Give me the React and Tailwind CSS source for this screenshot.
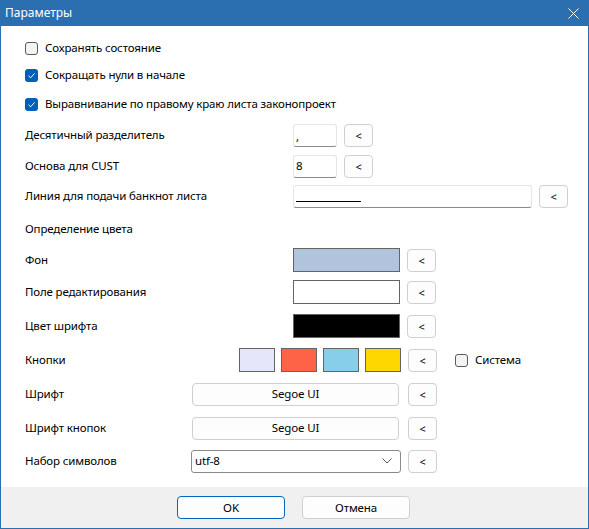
import React from "react";

const font = { fontFamily: '"Noto Sans", "Open Sans", sans-serif' };

const SmallButton = ({ className = "" }) => (
  <button
    className={`w-[29px] h-[23px] rounded-[4px] border border-[#d0d0d0] bg-[#fdfdfd] text-[11px] leading-none text-black flex items-center justify-center ${className}`}
  >
    &lt;
  </button>
);

const CheckBox = ({ checked }) =>
  checked ? (
    <span className="w-[13px] h-[13px] rounded-[3px] bg-[#005fb8] flex items-center justify-center shrink-0">
      <svg width="9" height="9" viewBox="0 0 9 9" fill="none">
        <path d="M1.5 4.8 L3.6 6.8 L7.6 2.4" stroke="white" strokeWidth="1" />
      </svg>
    </span>
  ) : (
    <span className="w-[13px] h-[13px] rounded-[3px] border border-[#5a5a5a] bg-[#f3f3f3] shrink-0" />
  );

const Swatch = ({ color, w = "w-[107px]" }) => (
  <div className={`${w} h-[24px] border border-[#646464]`} style={{ background: color }} />
);

const Row = ({ top, label, labelW = "w-[268px]", children }) => (
  <div className="flex items-center h-[24px]" style={{ marginTop: top }}>
    <div className={`${labelW} shrink-0`}>{label}</div>
    {children}
  </div>
);

export default function App() {
  return (
    <div
      className="w-[589px] h-[529px] flex flex-col border border-t-0 border-[#2b6fb0] bg-white text-[11.5px] tracking-[-0.15px] text-black overflow-hidden"
      style={font}
    >
      {/* title bar */}
      <div className="h-[26px] shrink-0 bg-[#2b6fb0] -mx-px flex items-center justify-between pl-[5px] pr-[10px] text-white text-[12px] tracking-normal">
        <span>Параметры</span>
        <svg width="11" height="11" viewBox="0 0 11 11" stroke="white" strokeWidth="1">
          <path d="M0.5 0.5 L10.5 10.5 M10.5 0.5 L0.5 10.5" />
        </svg>
      </div>

      <div className="flex-1 pl-[24px]">
        {/* checkboxes */}
        <div className="flex items-center gap-[7px] h-[24px] mt-[10px]">
          <CheckBox />
          <span>Сохранять состояние</span>
        </div>
        <div className="flex items-center gap-[7px] h-[24px] mt-[3px]">
          <CheckBox checked />
          <span>Сокращать нули в начале</span>
        </div>
        <div className="flex items-center gap-[7px] h-[24px] mt-[5px]">
          <CheckBox checked />
          <span>Выравнивание по правому краю листа законопроект</span>
        </div>

        <Row top={7} label="Десятичный разделитель">
          <div className="w-[44px] h-[23px] border border-[#e5e5e5] border-b-[#8a8a8a] rounded-[3px] flex items-end pl-[2px] pb-[3px] leading-none">,</div>
          <SmallButton className="ml-[7px]" />
        </Row>
        <Row top={7} label="Основа для CUST">
          <div className="w-[44px] h-[23px] border border-[#e5e5e5] border-b-[#8a8a8a] rounded-[3px] flex items-center pl-[2px]">8</div>
          <SmallButton className="ml-[7px]" />
        </Row>
        <Row top={6} label="Линия для подачи банкнот листа">
          <div className="w-[239px] h-[23px] border border-[#e5e5e5] border-b-[#8a8a8a] rounded-[3px] flex items-center pl-[2px]">
            <div className="w-[65px] h-px bg-black mt-[10px]" />
          </div>
          <SmallButton className="ml-[7px]" />
        </Row>

        <div className="flex items-center h-[24px] mt-[9px]">Определение цвета</div>

        <Row top={7} label="Фон">
          <Swatch color="#b0c4de" />
          <SmallButton className="ml-[7px]" />
        </Row>
        <Row top={8} label="Поле редактирования">
          <Swatch color="#ffffff" />
          <SmallButton className="ml-[7px]" />
        </Row>
        <Row top={10} label="Цвет шрифта">
          <Swatch color="#000000" />
          <SmallButton className="ml-[7px]" />
        </Row>
        <Row top={10} label="Кнопки" labelW="w-[214px]">
          <div className="flex gap-[6px]">
            <Swatch color="#e6e6fa" w="w-[36px]" />
            <Swatch color="#ff6347" w="w-[36px]" />
            <Swatch color="#87ceeb" w="w-[36px]" />
            <Swatch color="#ffd700" w="w-[36px]" />
          </div>
          <SmallButton className="ml-[7px]" />
          <div className="flex items-center gap-[7px] ml-[18px]">
            <CheckBox />
            <span>Система</span>
          </div>
        </Row>
        <Row top={10} label="Шрифт" labelW="w-[167px]">
          <button className="w-[207px] h-[23px] rounded-[4px] border border-[#d0d0d0] bg-[#fdfdfd]">Segoe UI</button>
          <SmallButton className="ml-[9px]" />
        </Row>
        <Row top={10} label="Шрифт кнопок" labelW="w-[167px]">
          <button className="w-[207px] h-[23px] rounded-[4px] border border-[#d0d0d0] bg-[#fdfdfd]">Segoe UI</button>
          <SmallButton className="ml-[9px]" />
        </Row>
        <Row top={9} label="Набор символов" labelW="w-[166px]">
          <div className="w-[210px] h-[23px] rounded-[3px] border border-[#8a8a8a] flex items-center justify-between pl-[3px] pr-[8px]">
            <span>utf-8</span>
            <svg width="10" height="6" viewBox="0 0 10 6" fill="none" stroke="#5a5a5a" strokeWidth="1">
              <path d="M0.5 0.5 L5 5 L9.5 0.5" />
            </svg>
          </div>
          <SmallButton className="ml-[7px]" />
        </Row>
      </div>

      {/* footer */}
      <div className="h-[41px] shrink-0 bg-[#f0f0f0] flex justify-center items-start pt-[9px] gap-[17px] pr-[2px]">
        <button className="w-[108px] h-[23px] rounded-[4px] border border-[#0067c0] bg-[#fdfdfd]">OK</button>
        <button className="w-[108px] h-[23px] rounded-[4px] border border-[#d0d0d0] bg-[#fdfdfd]">Отмена</button>
      </div>
    </div>
  );
}
